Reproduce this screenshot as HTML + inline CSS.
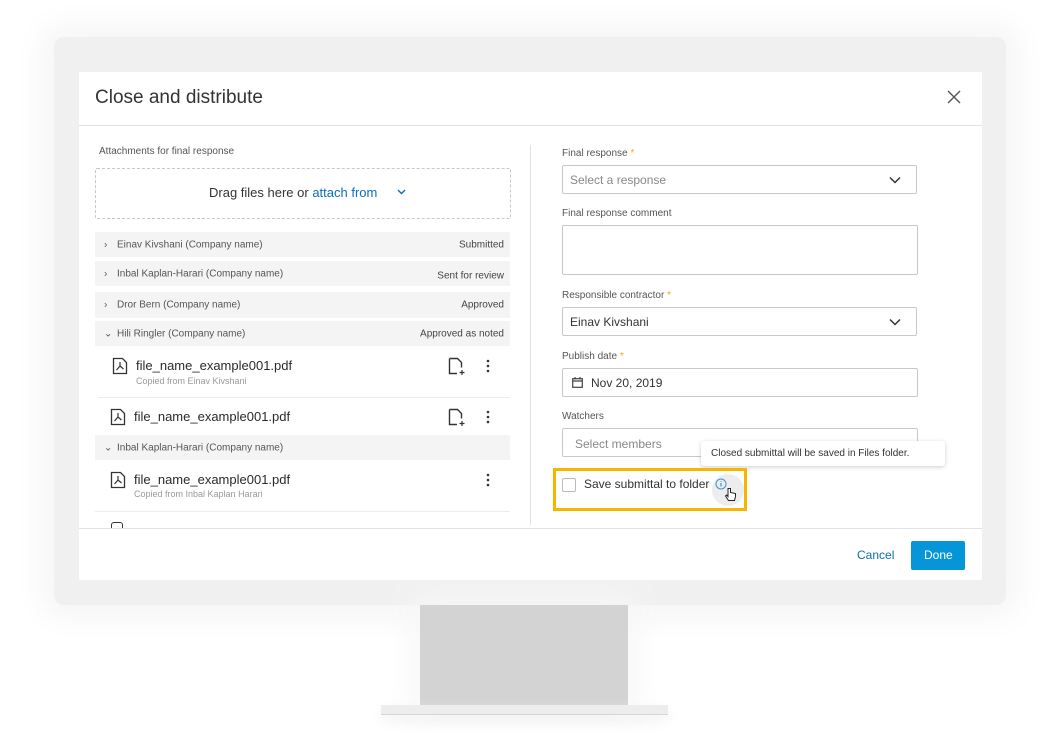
<!DOCTYPE html>
<html><head><meta charset="utf-8"><style>
*{margin:0;padding:0;box-sizing:border-box}
body{width:1060px;height:753px;background:#fff;position:relative;overflow:hidden;font-family:"Liberation Sans",sans-serif;color:#3c3c3c}
.a{position:absolute}
.t{position:absolute;white-space:nowrap;line-height:1}
.row{position:absolute;left:95px;width:415px;background:#f4f4f4}
.row .n{position:absolute;left:22px;top:50%;transform:translateY(-50%);font-size:10px;color:#555}
.row .s{position:absolute;right:6px;top:50%;transform:translateY(-50%);font-size:10px;color:#444}
.row .c{position:absolute;left:9px;top:50%;transform:translateY(-50%);font-size:10px;color:#555}
.lbl{position:absolute;left:562px;font-size:10px;color:#555;white-space:nowrap}
.lbl b{color:#f0a800;font-weight:normal}
.inp{position:absolute;left:562px;width:356px;border:1px solid #c8c8c8;border-radius:2px;background:#fff}
.fn{position:absolute;font-size:13px;color:#2a2a2a;white-space:nowrap}
.sub{position:absolute;font-size:9px;color:#999;white-space:nowrap}
</style></head><body>
<div class="a" style="left:54px;top:37px;width:952px;height:568px;border-radius:10px;background:#f1f0f1;box-shadow:0 0 30px 14px #f6f6f6"></div>
<div class="a" style="left:420px;top:605px;width:208px;height:100px;background:#d3d3d3;box-shadow:0 0 30px 10px #f7f7f7"></div>
<div class="a" style="left:381px;top:705px;width:287px;height:10px;background:#ededed;border-bottom:1px solid #d6d6d6;box-shadow:0 6px 14px #f0f0f0"></div>

<div class="a" style="left:79px;top:72px;width:903px;height:508px;background:#fff"></div>
<div class="t" style="left:95px;top:88px;font-size:19px;color:#333">Close and distribute</div>
<svg class="a" style="left:947px;top:90px" width="14" height="14"><path d="M1 1L13 13M13 1L1 13" stroke="#555" stroke-width="1.4"/></svg>
<div class="a" style="left:79px;top:125px;width:903px;height:1px;background:#e2e2e2"></div>
<div class="a" style="left:530px;top:145px;width:1px;height:380px;background:#e2e2e2"></div>
<div class="a" style="left:79px;top:528px;width:903px;height:1px;background:#e2e2e2"></div>

<div class="t" style="left:99px;top:147px;font-size:10px;color:#555">Attachments for final response</div>
<div class="a" style="left:95px;top:168px;width:416px;height:51px;border:1px dashed #c8c8c8;border-radius:2px"></div>
<div class="t" style="left:209px;top:186px;font-size:13px;color:#333">Drag files here or <span style="color:#0a6fb8">attach from</span></div>
<svg class="a" style="left:397px;top:189px" width="9" height="6"><path d="M1 1L4.5 4.5L8 1" stroke="#0a6fb8" stroke-width="1.4" fill="none"/></svg>

<div class="row" style="top:232px;height:25px"><span class="c">›</span><span class="n">Einav Kivshani (Company name)</span><span class="s">Submitted</span></div>
<div class="row" style="top:261px;height:25px"><span class="c">›</span><span class="n">Inbal Kaplan-Harari (Company name)</span><span class="s" style="top:60%">Sent for review</span></div>
<div class="row" style="top:292px;height:26px"><span class="c">›</span><span class="n">Dror Bern (Company name)</span><span class="s">Approved</span></div>
<div class="row" style="top:321px;height:25px"><span class="c">⌄</span><span class="n">Hili Ringler (Company name)</span><span class="s">Approved as noted</span></div>

<svg class="a" style="left:112px;top:357px" width="16" height="18"><path d="M1.5 1.5h9l4 4v11h-13z" fill="none" stroke="#333" stroke-width="1.3"/><path d="M8 5v4l-3.5 4M8 9l3.5 3" fill="none" stroke="#333" stroke-width="1.2"/></svg>
<div class="fn" style="left:136px;top:358px">file_name_example001.pdf</div>
<div class="sub" style="left:136px;top:376px">Copied from Einav Kivshani</div>
<svg class="a" style="left:448px;top:357px" width="18" height="18"><path d="M1.5 1.5h8l4 4v5M9 16.5H1.5v-15" fill="none" stroke="#333" stroke-width="1.4"/><path d="M14 13v5M11.5 15.5h5" stroke="#333" stroke-width="1.2"/></svg>
<svg class="a" style="left:486px;top:359px" width="4" height="14"><circle cx="2" cy="2" r="1.3" fill="#333"/><circle cx="2" cy="7" r="1.3" fill="#333"/><circle cx="2" cy="12" r="1.3" fill="#333"/></svg>
<div class="a" style="left:98px;top:397px;width:412px;height:1px;background:#ececec"></div>
<svg class="a" style="left:110px;top:408px" width="16" height="18"><path d="M1.5 1.5h9l4 4v11h-13z" fill="none" stroke="#333" stroke-width="1.3"/><path d="M8 5v4l-3.5 4M8 9l3.5 3" fill="none" stroke="#333" stroke-width="1.2"/></svg>
<div class="fn" style="left:134px;top:409px">file_name_example001.pdf</div>
<svg class="a" style="left:448px;top:408px" width="18" height="18"><path d="M1.5 1.5h8l4 4v5M9 16.5H1.5v-15" fill="none" stroke="#333" stroke-width="1.4"/><path d="M14 13v5M11.5 15.5h5" stroke="#333" stroke-width="1.2"/></svg>
<svg class="a" style="left:486px;top:410px" width="4" height="14"><circle cx="2" cy="2" r="1.3" fill="#333"/><circle cx="2" cy="7" r="1.3" fill="#333"/><circle cx="2" cy="12" r="1.3" fill="#333"/></svg>

<div class="row" style="top:435px;height:25px"><span class="c">⌄</span><span class="n">Inbal Kaplan-Harari (Company name)</span></div>
<svg class="a" style="left:110px;top:471px" width="16" height="18"><path d="M1.5 1.5h9l4 4v11h-13z" fill="none" stroke="#333" stroke-width="1.3"/><path d="M8 5v4l-3.5 4M8 9l3.5 3" fill="none" stroke="#333" stroke-width="1.2"/></svg>
<div class="fn" style="left:134px;top:472px">file_name_example001.pdf</div>
<div class="sub" style="left:134px;top:489px">Copied from Inbal Kaplan Harari</div>
<svg class="a" style="left:486px;top:473px" width="4" height="14"><circle cx="2" cy="2" r="1.3" fill="#333"/><circle cx="2" cy="7" r="1.3" fill="#333"/><circle cx="2" cy="12" r="1.3" fill="#333"/></svg>
<div class="a" style="left:95px;top:511px;width:415px;height:1px;background:#ececec"></div>
<div class="a" style="left:111px;top:522px;width:12px;height:6px;border:1.3px solid #333;border-bottom:none;border-radius:3px 3px 0 0"></div>

<div class="lbl" style="top:148px">Final response <b>*</b></div>
<div class="inp" style="top:165px;height:29px;width:355px"><span class="t" style="left:7px;top:8px;font-size:12px;color:#888">Select a response</span>
<svg class="a" style="left:326px;top:10px" width="12" height="8"><path d="M1 1.5L6 6.5L11 1.5" stroke="#333" stroke-width="1.5" fill="none"/></svg></div>
<div class="lbl" style="top:208px">Final response comment</div>
<div class="inp" style="top:225px;height:50px"></div>
<div class="lbl" style="top:290px">Responsible contractor <b>*</b></div>
<div class="inp" style="top:307px;height:29px;width:355px"><span class="t" style="left:7px;top:8px;font-size:12px;color:#333">Einav Kivshani</span>
<svg class="a" style="left:326px;top:10px" width="12" height="8"><path d="M1 1.5L6 6.5L11 1.5" stroke="#333" stroke-width="1.5" fill="none"/></svg></div>
<div class="lbl" style="top:351px">Publish date <b>*</b></div>
<div class="inp" style="top:368px;height:29px"><svg class="a" style="left:9px;top:8px" width="11" height="11"><rect x="0.7" y="1.7" width="9.6" height="8.6" fill="none" stroke="#444" stroke-width="1.2"/><path d="M0.7 4h9.6M3 0v2.5M8 0v2.5" stroke="#444" stroke-width="1.2"/></svg><span class="t" style="left:28px;top:8px;font-size:12px;color:#333">Nov 20, 2019</span></div>
<div class="lbl" style="top:411px">Watchers</div>
<div class="inp" style="top:428px;height:29px;width:356px"><span class="t" style="left:12px;top:9px;font-size:12px;color:#888">Select members</span></div>

<div class="a" style="left:701px;top:441px;width:244px;height:25px;background:#fff;border-radius:3px;box-shadow:0 1px 4px rgba(0,0,0,.2)"></div>
<div class="t" style="left:711px;top:449px;font-size:10px;color:#333">Closed submittal will be saved in Files folder.</div>

<div class="a" style="left:553px;top:468px;width:194px;height:43px;border:3px solid #f7b500"></div>
<div class="a" style="left:562px;top:478px;width:14px;height:14px;border:1px solid #bbb;border-radius:2px;background:#fff"></div>
<div class="t" style="left:584px;top:478px;font-size:12px;color:#333">Save submittal to folder</div>
<div class="a" style="left:712px;top:474px;width:32px;height:32px;border-radius:50%;background:#ededed"></div>
<svg class="a" style="left:715px;top:478px" width="12" height="12"><circle cx="6" cy="6" r="5" fill="none" stroke="#3a95d6" stroke-width="1"/><path d="M6 5v3.5M6 3v0.8" stroke="#3a95d6" stroke-width="1.2"/></svg>
<svg class="a" style="left:725px;top:487px" width="12" height="15"><path d="M3 1.5v8l-1.5-1.5-1 1 3 4.5h6l1-4v-3l-5-1v-4z" fill="#fff" stroke="#222" stroke-width="1"/></svg>

<div class="t" style="left:857px;top:549px;font-size:12px;color:#0a6fa8">Cancel</div>
<div class="a" style="left:911px;top:541px;width:54px;height:29px;background:#0696d7;border-radius:2px"></div>
<div class="t" style="left:924px;top:549px;font-size:12px;color:#fff">Done</div>
</body></html>
